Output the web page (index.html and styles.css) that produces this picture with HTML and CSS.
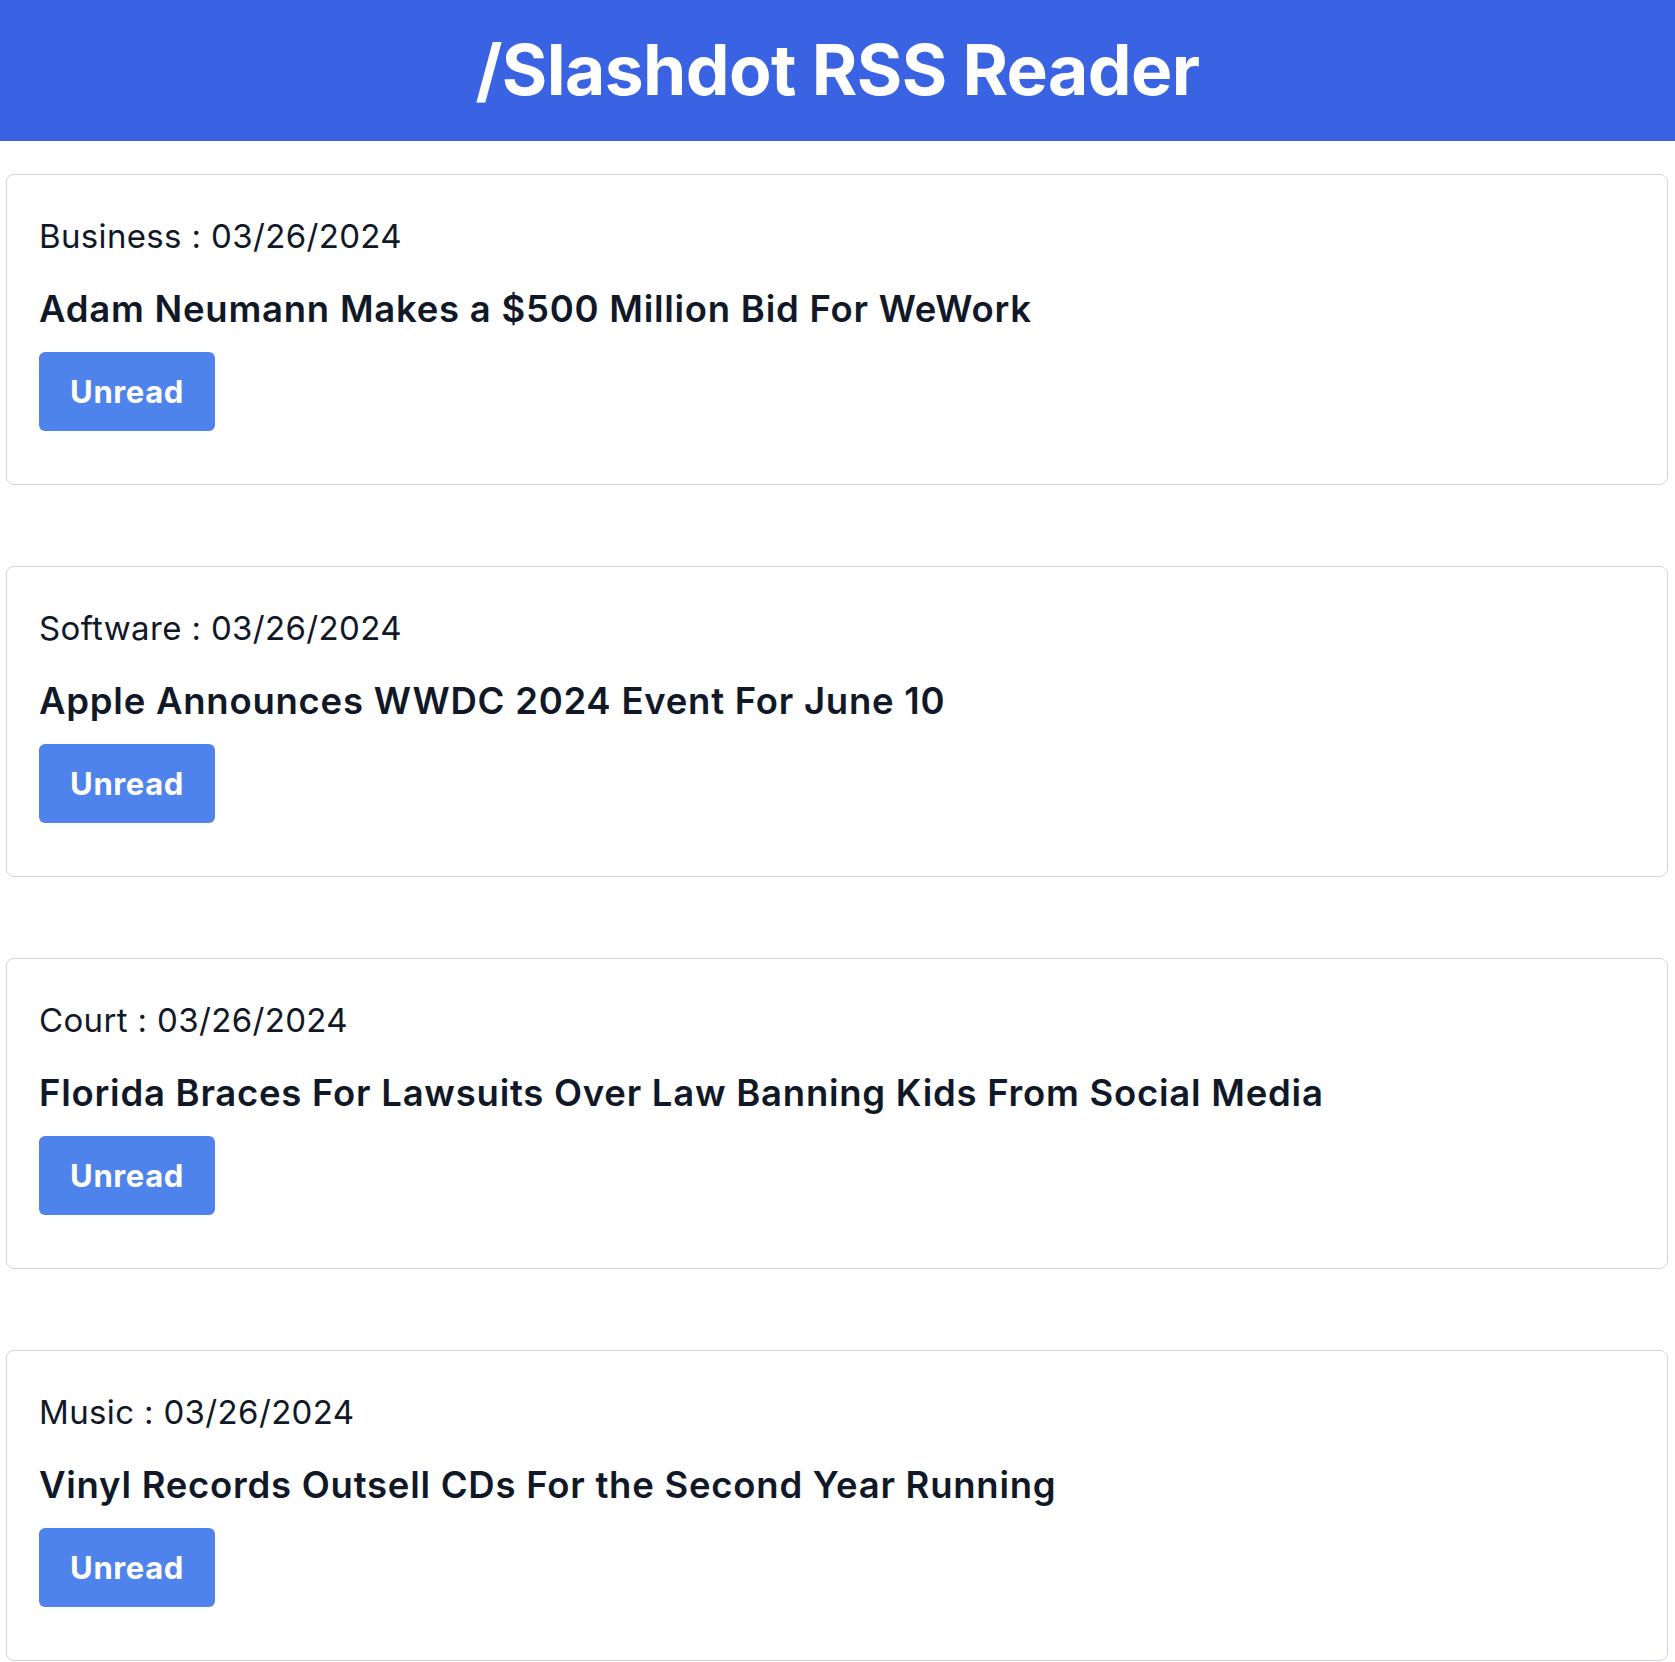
FILE: index.html
```html
<!DOCTYPE html>
<html lang="en">
<head>
<meta charset="utf-8">
<title>/Slashdot RSS Reader</title>
<link rel="stylesheet" href="styles.css">
</head>
<body>
<header class="topbar">
  <h1 class="topbar-title">/Slashdot RSS Reader</h1>
</header>
<main class="feed">
  <article class="card">
    <p class="card-meta">Business : 03/26/2024</p>
    <h2 class="card-title">Adam Neumann Makes a $500 Million Bid For WeWork</h2>
    <button class="btn-unread" type="button">Unread</button>
  </article>
  <article class="card">
    <p class="card-meta">Software : 03/26/2024</p>
    <h2 class="card-title">Apple Announces WWDC 2024 Event For June 10</h2>
    <button class="btn-unread" type="button">Unread</button>
  </article>
  <article class="card">
    <p class="card-meta">Court : 03/26/2024</p>
    <h2 class="card-title">Florida Braces For Lawsuits Over Law Banning Kids From Social Media</h2>
    <button class="btn-unread" type="button">Unread</button>
  </article>
  <article class="card">
    <p class="card-meta">Music : 03/26/2024</p>
    <h2 class="card-title">Vinyl Records Outsell CDs For the Second Year Running</h2>
    <button class="btn-unread" type="button">Unread</button>
  </article>
</main>
</body>
</html>
```
FILE: styles.css
```css
* { box-sizing: border-box; }
html, body { margin: 0; padding: 0; }
body {
  font-family: Inter, "Noto Sans", "Liberation Sans", sans-serif;
  color: #111827;
  background: #ffffff;
}
.topbar {
  background: #3a63e3;
  height: 141px;
  display: flex;
  align-items: center;
  justify-content: center;
}
.topbar-title {
  margin: 0;
  color: #ffffff;
  font-size: 69.5px;
  font-weight: 700;
  line-height: 1;
  letter-spacing: -0.6px;
}
.feed {
  display: flex;
  flex-direction: column;
  gap: 81px;
  padding: 33px 7px 0 6px;
}
.card {
  border: 1px solid #d1d5db;
  border-radius: 8px;
  height: 311px;
  padding: 43px 32px 0 32px;
  display: flex;
  flex-direction: column;
  align-items: flex-start;
}
.card-meta {
  margin: 0;
  font-size: 33px;
  line-height: 36px;
  font-weight: 400;
  letter-spacing: 0.35px;
}
.card-title {
  margin: 35px 0 0 0;
  font-size: 36.5px;
  line-height: 40px;
  font-weight: 600;
  letter-spacing: 0.75px;
}
.btn-unread {
  margin-top: 23px;
  height: 79px;
  width: 176px;
  border: none;
  border-radius: 6px;
  background: #4f83ec;
  color: #ffffff;
  font-family: inherit;
  font-size: 31px;
  font-weight: 700;
  letter-spacing: 0.6px;
  padding: 0;
}
```
